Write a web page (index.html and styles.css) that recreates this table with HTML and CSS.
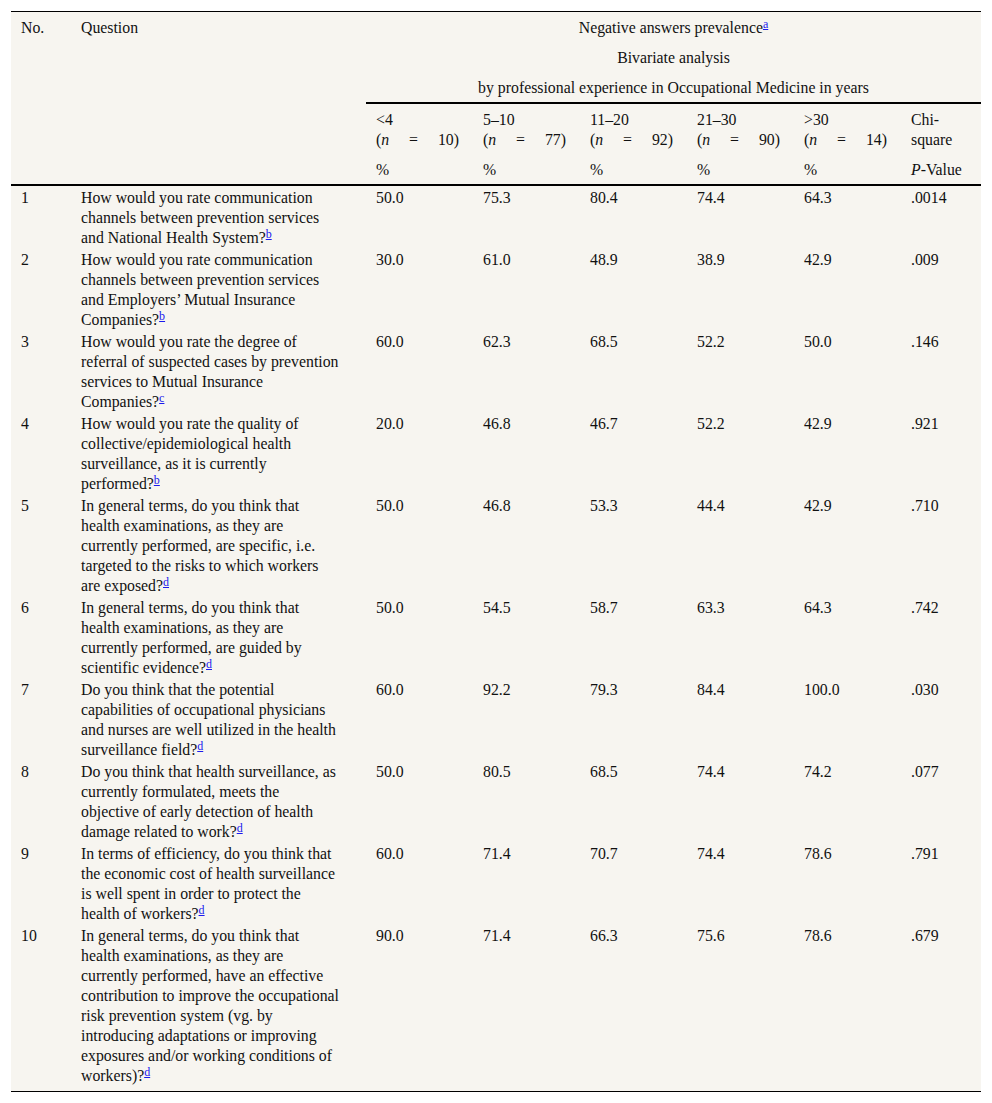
FILE: index.html
```html
<!DOCTYPE html>
<html lang="en">
<head>
<meta charset="utf-8">
<title>Negative answers prevalence by professional experience</title>
<link rel="stylesheet" href="styles.css">
</head>
<body>
<table class="data">
  <colgroup>
    <col class="c-no">
    <col class="c-q">
    <col class="c-yr"><col class="c-yr"><col class="c-yr"><col class="c-yr"><col class="c-yr">
    <col class="c-chi">
  </colgroup>
  <thead>
    <tr>
      <th rowspan="5">No.</th>
      <th rowspan="5">Question</th>
      <th colspan="6" class="center">Negative answers prevalence<sup><a href="#">a</a></sup></th>
    </tr>
    <tr>
      <th colspan="6" class="center">Bivariate analysis</th>
    </tr>
    <tr>
      <th colspan="6" class="center rule">by professional experience in Occupational Medicine in years</th>
    </tr>
    <tr>
      <th class="yr">&lt;4<span class="nline">(<i>n</i> = 10)</span></th>
      <th class="yr">5–10<span class="nline">(<i>n</i> = 77)</span></th>
      <th class="yr">11–20<span class="nline">(<i>n</i> = 92)</span></th>
      <th class="yr">21–30<span class="nline">(<i>n</i> = 90)</span></th>
      <th class="yr">&gt;30<span class="nline">(<i>n</i> = 14)</span></th>
      <th class="chi">Chi-square</th>
    </tr>
    <tr>
      <th class="yr">%</th>
      <th class="yr">%</th>
      <th class="yr">%</th>
      <th class="yr">%</th>
      <th class="yr">%</th>
      <th class="chi"><i>P</i>-Value</th>
    </tr>
  </thead>
  <tbody>
    <tr>
      <td>1</td>
      <td class="q">How would you rate communication channels between prevention services and National Health System?<sup><a href="#">b</a></sup></td>
      <td>50.0</td><td>75.3</td><td>80.4</td><td>74.4</td><td>64.3</td><td>.0014</td>
    </tr>
    <tr>
      <td>2</td>
      <td class="q">How would you rate communication channels between prevention services and Employers’ Mutual Insurance Companies?<sup><a href="#">b</a></sup></td>
      <td>30.0</td><td>61.0</td><td>48.9</td><td>38.9</td><td>42.9</td><td>.009</td>
    </tr>
    <tr>
      <td>3</td>
      <td class="q">How would you rate the degree of referral of suspected cases by prevention services to Mutual Insurance Companies?<sup><a href="#">c</a></sup></td>
      <td>60.0</td><td>62.3</td><td>68.5</td><td>52.2</td><td>50.0</td><td>.146</td>
    </tr>
    <tr>
      <td>4</td>
      <td class="q">How would you rate the quality of collective/epidemiological health surveillance, as it is currently performed?<sup><a href="#">b</a></sup></td>
      <td>20.0</td><td>46.8</td><td>46.7</td><td>52.2</td><td>42.9</td><td>.921</td>
    </tr>
    <tr>
      <td>5</td>
      <td class="q">In general terms, do you think that health examinations, as they are currently performed, are specific, i.e. targeted to the risks to which workers are exposed?<sup><a href="#">d</a></sup></td>
      <td>50.0</td><td>46.8</td><td>53.3</td><td>44.4</td><td>42.9</td><td>.710</td>
    </tr>
    <tr>
      <td>6</td>
      <td class="q">In general terms, do you think that health examinations, as they are currently performed, are guided by scientific evidence?<sup><a href="#">d</a></sup></td>
      <td>50.0</td><td>54.5</td><td>58.7</td><td>63.3</td><td>64.3</td><td>.742</td>
    </tr>
    <tr>
      <td>7</td>
      <td class="q">Do you think that the potential capabilities of occupational physicians and nurses are well utilized in the health surveillance field?<sup><a href="#">d</a></sup></td>
      <td>60.0</td><td>92.2</td><td>79.3</td><td>84.4</td><td>100.0</td><td>.030</td>
    </tr>
    <tr>
      <td>8</td>
      <td class="q">Do you think that health surveillance, as currently formulated, meets the objective of early detection of health damage related to work?<sup><a href="#">d</a></sup></td>
      <td>50.0</td><td>80.5</td><td>68.5</td><td>74.4</td><td>74.2</td><td>.077</td>
    </tr>
    <tr>
      <td>9</td>
      <td class="q">In terms of efficiency, do you think that the economic cost of health surveillance is well spent in order to protect the health of workers?<sup><a href="#">d</a></sup></td>
      <td>60.0</td><td>71.4</td><td>70.7</td><td>74.4</td><td>78.6</td><td>.791</td>
    </tr>
    <tr class="last">
      <td>10</td>
      <td class="q">In general terms, do you think that health examinations, as they are currently performed, have an effective contribution to improve the occupational risk prevention system (vg. by introducing adaptations or improving exposures and/or working conditions of workers)?<sup><a href="#">d</a></sup></td>
      <td>90.0</td><td>71.4</td><td>66.3</td><td>75.6</td><td>78.6</td><td>.679</td>
    </tr>
  </tbody>
</table>
</body>
</html>
```

FILE: styles.css
```css
html, body {
  margin: 0;
  padding: 0;
  background: #ffffff;
}

body {
  font-family: "Liberation Serif", "Times New Roman", serif;
  font-size: 15.8px;
  line-height: 20px;
  color: #111111;
}

.data {
  margin: 11px 0 0 11px;
  width: 970px;
  table-layout: fixed;
  border-collapse: collapse;
  background: #f7f5f0;
  border-top: 1px solid #000000;
  border-bottom: 1px solid #000000;
}

.c-no { width: 60px; }
.c-q { width: 295px; }
.c-yr { width: 107px; }
.c-chi { width: 80px; }

.data thead {
  border-bottom: 2px solid #000000;
}

.data th {
  font-weight: normal;
  text-align: left;
  vertical-align: top;
  padding: 6px 10px 4px;
}

.data th.center {
  text-align: center;
}

.data th.rule {
  border-bottom: 2px solid #000000;
}

.data th.yr,
.data th.chi {
  padding-right: 14px;
}

.nline {
  display: block;
  text-align: justify;
  text-align-last: justify;
}

.data td {
  vertical-align: top;
  padding: 2px 10px 0;
}

.data td.q {
  padding-right: 26px;
}

.data tr.last td {
  padding-bottom: 5px;
}

sup {
  font-size: 0.76em;
  line-height: 0;
  vertical-align: 0.45em;
}

sup a {
  color: #1a1aee;
  text-decoration: underline;
}
```
